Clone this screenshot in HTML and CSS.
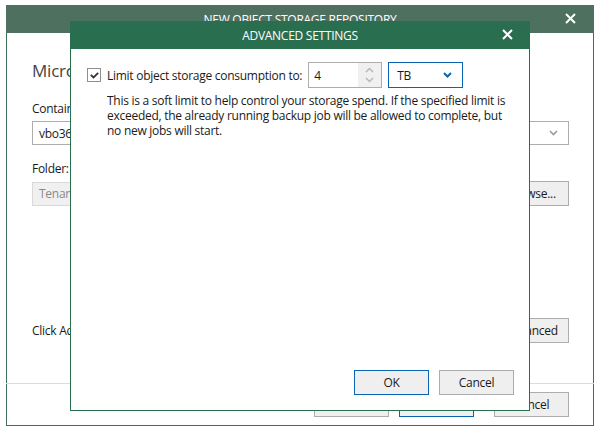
FILE: index.html
```html
<!DOCTYPE html>
<html>
<head>
<meta charset="utf-8">
<link rel="stylesheet" href="styles.css">
</head>
<body>
<div class="outer">
  <div class="outer-title">
    <span class="title-text">NEW OBJECT STORAGE REPOSITORY</span>
    <svg class="close" width="11" height="11" viewBox="0 0 11 11"><path d="M1 1L10 10M10 1L1 10" stroke="#fff" stroke-width="2"/></svg>
  </div>
  <div class="outer-body">
    <div class="heading">Microsoft Azure Blob Storage Container</div>
    <div class="lbl">Container:</div>
    <div class="select">
      <span>vbo365</span>
      <svg width="9" height="6" viewBox="0 0 9 6"><path d="M1 1L4.5 4.5L8 1" stroke="#9a9a9a" stroke-width="1.6" fill="none"/></svg>
    </div>
    <div class="lbl lbl-folder">Folder:</div>
    <div class="row">
      <div class="field disabled">Tenant</div>
      <button class="btn">Browse...</button>
    </div>
    <div class="spacer"></div>
    <div class="row adv-row">
      <span>Click Advanced to specify additional options.</span>
      <button class="btn">Advanced</button>
    </div>
  </div>
  <div class="outer-footer">
    <button class="btn">&lt; Previous</button>
    <button class="btn primary next">Next &gt;</button>
    <button class="btn">Cancel</button>
  </div>
</div>

<div class="modal">
  <div class="modal-title">
    <span class="title-text">ADVANCED SETTINGS</span>
    <svg class="close" width="11" height="11" viewBox="0 0 11 11"><path d="M1 1L10 10M10 1L1 10" stroke="#fff" stroke-width="2"/></svg>
  </div>
  <div class="modal-body">
    <div class="limit-row">
      <span class="checkbox">
        <svg width="9" height="7" viewBox="0 0 9 7"><path d="M0.8 2.8L3.5 5.5L8.2 0.8" stroke="#333" stroke-width="1.8" fill="none"/></svg>
      </span>
      <span class="limit-label">Limit object storage consumption to:</span>
      <div class="spin">
        <span class="spin-value">4</span>
        <span class="spin-btns">
          <svg width="9" height="6" viewBox="0 0 9 6"><path d="M1 5L4.5 1.5L8 5" stroke="#b5b5b5" stroke-width="1.4" fill="none"/></svg>
          <svg width="9" height="6" viewBox="0 0 9 6"><path d="M1 1L4.5 4.5L8 1" stroke="#b5b5b5" stroke-width="1.4" fill="none"/></svg>
        </span>
      </div>
      <div class="unit">
        <span>TB</span>
        <svg width="9" height="6" viewBox="0 0 9 6"><path d="M1 1L4.5 4.5L8 1" stroke="#0a64b4" stroke-width="2" fill="none"/></svg>
      </div>
    </div>
    <p class="desc">This is a soft limit to help control your storage spend. If the specified limit is<br>exceeded, the already running backup job will be allowed to complete, but<br>no new jobs will start.</p>
    <div class="modal-footer">
      <button class="btn primary">OK</button>
      <button class="btn">Cancel</button>
    </div>
  </div>
</div>
</body>
</html>
```

FILE: styles.css
```css
html, body {
  margin: 0;
  padding: 0;
  background: #fff;
}
body {
  font-family: "Open Sans", "Noto Sans", sans-serif;
  font-size: 12px;
  letter-spacing: -0.27px;
  color: #1a1a1a;
  width: 602px;
  height: 435px;
  overflow: hidden;
  position: relative;
}
.outer {
  margin: 5px 0 0 6px;
  width: 586px;
  height: 420px;
  border: 1px solid #3f6f58;
  border-top: none;
  display: flex;
  flex-direction: column;
}
.outer-title {
  height: 28px;
  background: #4e705f;
  color: #fff;
  display: flex;
  align-items: center;
  justify-content: center;
  position: relative;
  margin: 0 -1px;
}
.title-text {
  font-size: 12px;
}
.outer-title .close {
  position: absolute;
  right: 18px;
  top: 8px;
}
.outer-body {
  flex: 1;
  padding: 0 24px 0 25px;
  display: flex;
  flex-direction: column;
}
.heading {
  font-size: 17px;
  letter-spacing: -0.2px;
  color: #444;
  margin-top: 26px;
  height: 24px;
  white-space: nowrap;
}
.lbl {
  margin-top: 17px;
  height: 18px;
}
.lbl-folder {
  margin-top: 15px;
}
.select {
  height: 22px;
  border: 1px solid #adadad;
  margin-top: 3px;
  display: flex;
  align-items: center;
  justify-content: space-between;
  padding: 0 10px 0 6px;
}
.row {
  display: flex;
  align-items: center;
  gap: 8px;
  margin-top: 3px;
}
.field {
  flex: 1;
  height: 22px;
  border: 1px solid #d9d9d9;
  display: flex;
  align-items: center;
  padding-left: 6px;
}
.disabled {
  background: #f0f0f0;
  color: #8a8a8a;
}
.btn {
  font-family: inherit;
  font-size: 12px;
  letter-spacing: -0.27px;
  color: #1a1a1a;
  width: 75px;
  height: 25px;
  background: #efefef;
  border: 1px solid #adadad;
  padding: 0;
  margin: 0;
}
.btn.primary {
  border-color: #0a64b4;
}
.spacer {
  flex: 1;
}
.adv-row {
  justify-content: space-between;
  margin-bottom: 40px;
}
.outer-footer {
  height: 42px;
  border-top: 1px solid #dcdcdc;
  margin: 0 -1px;
  display: flex;
  justify-content: flex-end;
  align-items: flex-start;
  gap: 10px;
  padding: 8px 25px 0 0;
  box-sizing: border-box;
}
.outer-footer .next {
  margin-right: 10px;
}
.modal {
  position: absolute;
  left: 70px;
  top: 21px;
  width: 458px;
  height: 389px;
  border: 1px solid #2a6e50;
  border-top: none;
  background: #fff;
  display: flex;
  flex-direction: column;
}
.modal-title {
  height: 28px;
  background: #2a6e50;
  color: #fff;
  display: flex;
  align-items: center;
  justify-content: center;
  position: relative;
  margin: 0 -1px;
}
.modal-title .close {
  position: absolute;
  right: 17px;
  top: 8px;
}
.modal-body {
  flex: 1;
  display: flex;
  flex-direction: column;
  padding: 13px 15px 15px 16px;
}
.limit-row {
  display: flex;
  align-items: center;
  height: 26px;
}
.checkbox {
  width: 12px;
  height: 12px;
  border: 1px solid #8f8f8f;
  display: flex;
  align-items: center;
  justify-content: center;
  margin-right: 6px;
}
.limit-label {
  white-space: nowrap;
  margin-right: 6px;
}
.spin {
  width: 72px;
  height: 24px;
  border: 1px solid #adadad;
  display: flex;
  align-items: stretch;
}
.spin-value {
  flex: 1;
  display: flex;
  align-items: center;
  padding-left: 5px;
}
.spin-btns {
  width: 23px;
  background: #f0f0f0;
  display: flex;
  flex-direction: column;
  align-items: center;
  justify-content: center;
  gap: 4px;
}
.unit {
  margin-left: 6px;
  border: 1px solid #0a64b4;
  display: flex;
  align-items: center;
  justify-content: space-between;
  padding: 0 10px 0 8px;
  box-sizing: border-box;
  width: 75px;
  height: 26px;
}
.desc {
  margin: 5px 0 0 20px;
  line-height: 15px;
  white-space: nowrap;
}
.modal-footer {
  margin-top: auto;
  display: flex;
  justify-content: flex-end;
  gap: 10px;
}
```
